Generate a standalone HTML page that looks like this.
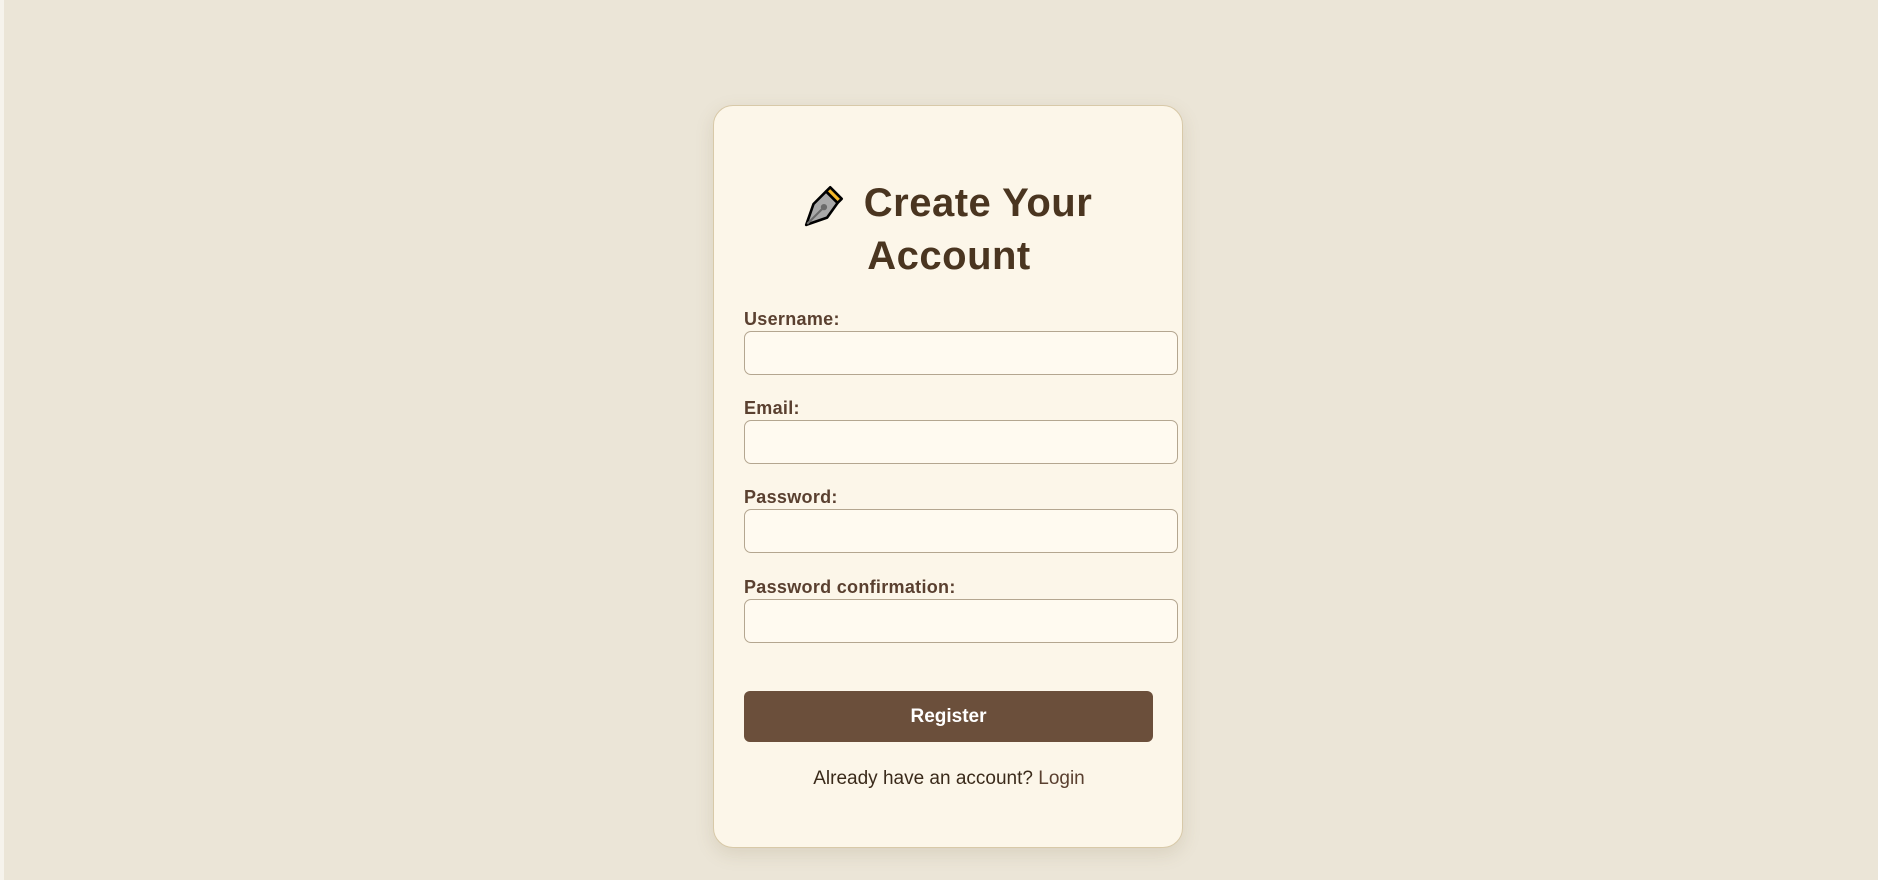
<!DOCTYPE html>
<html><head><meta charset="utf-8"><style>
html,body{margin:0;padding:0;width:1878px;height:880px;overflow:hidden;background:#ebe5d7;font-family:"Comic Sans MS","Liberation Sans",sans-serif;}
.strip{position:absolute;left:0;top:0;width:4px;height:880px;background:#f6f3ec;}
.card{position:absolute;left:713px;top:105px;width:468px;height:741px;background:#fcf6e9;border:1px solid #d8c9a8;border-radius:20px;box-shadow:0 6px 18px rgba(120,100,60,0.15);}
h1{position:absolute;left:0;width:470px;text-align:center;margin:0;font-size:40px;line-height:53px;color:#4a3520;top:71px;letter-spacing:0.5px;}
label{position:absolute;left:30px;font-size:18px;font-weight:bold;color:#5a4030;letter-spacing:0.3px;}
.in{position:absolute;left:30px;width:432px;height:42px;border:1px solid #b4a690;border-radius:7px;background:#fffaf0;}
.btn{position:absolute;left:30px;top:585px;width:409px;height:51px;background:#6b4f3b;border-radius:6px;color:#fff;font-weight:bold;font-size:19px;text-align:center;line-height:51px;}
.al{position:absolute;left:0;width:470px;text-align:center;top:662px;font-size:19px;color:#3a2a1a;}
.al span{color:#5a4030;}
</style></head><body>
<div class="strip"></div>
<div class="card">
<svg style="position:absolute;left:88px;top:75px" width="46" height="46" viewBox="0 0 44 44">
<path d="M27 6 L38 17 L34 21 L23 10 Z" fill="#f5b82a" stroke="#000" stroke-width="2.5" stroke-linejoin="round"/>
<path d="M23 10 L34 21 L24 35 L4 42 L11 22 Z" fill="#a8a8a8" stroke="#000" stroke-width="2.5" stroke-linejoin="round"/>
<path d="M5 41 L19 27" stroke="#6a6a6a" stroke-width="2"/>
<circle cx="21" cy="25" r="3" fill="#6a6a6a"/>
</svg>
<h1>&nbsp;&nbsp;&nbsp;&nbsp;&nbsp;Create Your<br>Account</h1>
<label style="top:203px">Username:</label>
<div class="in" style="top:225px"></div>
<label style="top:292px">Email:</label>
<div class="in" style="top:314px"></div>
<label style="top:381px">Password:</label>
<div class="in" style="top:403px"></div>
<label style="top:471px">Password confirmation:</label>
<div class="in" style="top:493px"></div>
<div class="btn">Register</div>
<div class="al">Already have an account? <span>Login</span></div>
</div>
</body></html>
